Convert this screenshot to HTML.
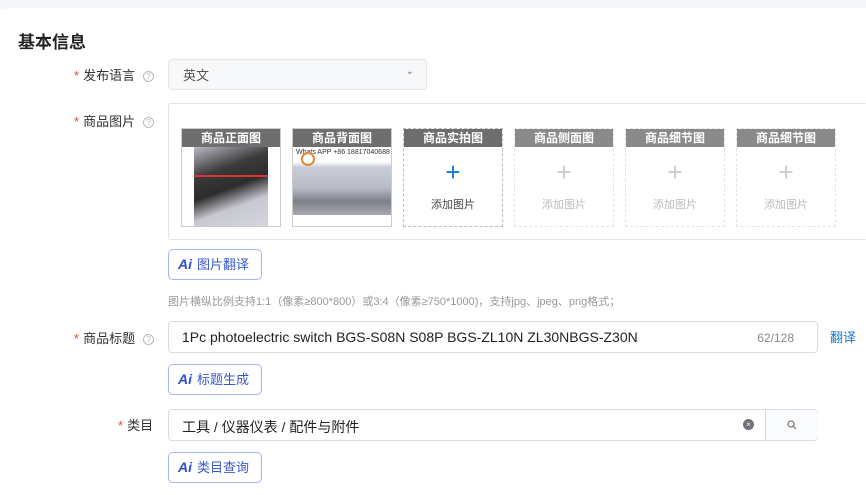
<!DOCTYPE html>
<html><head><meta charset="utf-8"><style>
*{box-sizing:border-box;margin:0;padding:0}
body{width:866px;height:495px;overflow:hidden;background:#fff;font-family:"Liberation Sans","Noto Sans CJK SC",sans-serif;color:#333;position:relative}
.top{position:absolute;left:0;top:0;width:866px;height:9px;background:#f6f7f8}
.card{position:absolute;left:2px;top:8px;width:864px;height:487px;background:#fff;border-radius:6px 0 0 0}
.abs{position:absolute}
.h{left:18px;top:28px;font-size:17px;font-weight:bold;color:#222}
.lab{font-size:13px;color:#333;text-align:right;white-space:nowrap}
.lab b{color:#e5483a;font-weight:normal;margin-right:4px}
.q{display:inline-block;width:11px;height:11px;border:1px solid #bbb;border-radius:50%;font-size:8px;line-height:9px;text-align:center;color:#bbb;margin-left:8px;vertical-align:1px}
.inp{border:1px solid #d9dce1;border-radius:4px;background:#fff}
.slot{position:absolute;top:128px;width:100px;height:99px;border:1px solid #ccc;overflow:hidden}
.slot .hd{height:18px;background:#6e6e6e;color:#fff;font-size:12px;font-weight:bold;text-align:center;line-height:18px}
.slot.e{border:1px dashed #bbb}
.slot.e .plus{text-align:center;font-size:26px;color:#1677d2;line-height:26px;margin-top:12px}
.slot.e .t{text-align:center;font-size:11px;color:#444;margin-top:11px}
.slot.d{border-color:#e3e3e3}
.slot.d .hd{background:#8a8a8a}
.slot.d .plus{color:#ccc}.slot.d .t{color:#bbb}
.ai{position:absolute;left:168px;width:94px;height:31px;border:1px solid #a9b4e8;border-radius:5px;font-size:13px;color:#3a58c9;line-height:29px;padding-left:9px}
.ai i{font-style:italic;font-weight:bold;color:#2f4fc8;margin-right:5px;font-size:14px}
</style></head><body>
<div class="top"></div>
<div class="card"></div>
<div class="abs h">基本信息</div>

<div class="abs lab" style="left:74px;top:65px"><b>*</b>发布语言<span class="q">?</span></div>
<div class="abs inp" style="left:168px;top:59px;width:259px;height:31px;background:#f7f8fa;border-color:#e3e5e9;font-size:13px;color:#555;padding:5px 0 0 14px">英文<span style="position:absolute;right:12px;top:6px;font-size:10px;color:#777">&#8964;</span></div>

<div class="abs lab" style="left:74px;top:111px"><b>*</b>商品图片<span class="q">?</span></div>
<div class="abs" style="left:168px;top:103px;width:700px;height:137px;border:1px solid #e3e5e9;border-radius:3px"></div>

<div class="slot" style="left:181px"><div class="hd">商品正面图</div>
<div style="margin:0 12px;height:81px;background:linear-gradient(160deg,#b9b9c4 0%,#3a3a3a 30%,#2c2c2c 50%,#c8c8d2 70%,#d6d6df 100%);position:relative"><div style="position:absolute;top:28px;left:0;right:0;height:2px;background:#d33"></div></div></div>
<div class="slot" style="left:292px"><div class="hd">商品背面图</div>
<div style="height:68px;background:linear-gradient(180deg,#fff 0%,#fff 22%,#c8ccd8 30%,#b9bcc7 60%,#7d8088 80%,#a8aab0 100%);position:relative;font-size:7px;color:#333;padding:2px 3px;white-space:nowrap;overflow:hidden">Whats APP +86 18817040688<div style="position:absolute;left:8px;top:5px;width:14px;height:14px;border:2px solid #e38a36;border-radius:50%"></div></div></div>
<div class="slot e" style="left:403px"><div class="hd">商品实拍图</div><div class="plus">+</div><div class="t">添加图片</div></div>
<div class="slot e d" style="left:514px"><div class="hd">商品侧面图</div><div class="plus">+</div><div class="t">添加图片</div></div>
<div class="slot e d" style="left:625px"><div class="hd">商品细节图</div><div class="plus">+</div><div class="t">添加图片</div></div>
<div class="slot e d" style="left:736px"><div class="hd">商品细节图</div><div class="plus">+</div><div class="t">添加图片</div></div>

<div class="ai" style="top:249px"><i>Ai</i>图片翻译</div>
<div class="abs" style="left:168px;top:293px;font-size:11px;color:#999">图片横纵比例支持1:1（像素≥800*800）或3:4（像素≥750*1000)，支持jpg、jpeg、png格式；</div>

<div class="abs lab" style="left:74px;top:328px"><b>*</b>商品标题<span class="q">?</span></div>
<div class="abs inp" style="left:168px;top:321px;width:650px;height:32px;font-size:14px;color:#222;padding:7px 0 0 13px">1Pc photoelectric switch BGS-S08N S08P BGS-ZL10N ZL30NBGS-Z30N<span style="position:absolute;right:23px;top:9px;font-size:12px;color:#888">62/128</span></div>
<div class="abs" style="left:830px;top:327px;font-size:13px;color:#1677d2">翻译</div>
<div class="ai" style="top:364px"><i>Ai</i>标题生成</div>

<div class="abs lab" style="left:118px;top:415px"><b>*</b>类目</div>
<div class="abs inp" style="left:168px;top:409px;width:650px;height:32px;font-size:14px;color:#222;padding:7px 0 0 13px">工具 / 仪器仪表 / 配件与附件
<span style="position:absolute;left:574px;top:9px;width:11px;height:11px;border-radius:50%;background:#6f7278;color:#fff;font-size:8px;line-height:11px;text-align:center">×</span>
<span style="position:absolute;left:596px;top:0;width:53px;height:30px;border-left:1px solid #d9dce1;background:#fafbfc;border-radius:0 4px 4px 0"><svg width="10" height="10" style="position:absolute;left:21px;top:10px" viewBox="0 0 10 10"><circle cx="4" cy="4" r="3" fill="none" stroke="#777" stroke-width="1.2"/><line x1="6.3" y1="6.3" x2="9" y2="9" stroke="#777" stroke-width="1.2"/></svg></span></div>
<div class="ai" style="top:452px"><i>Ai</i>类目查询</div>
</body></html>
